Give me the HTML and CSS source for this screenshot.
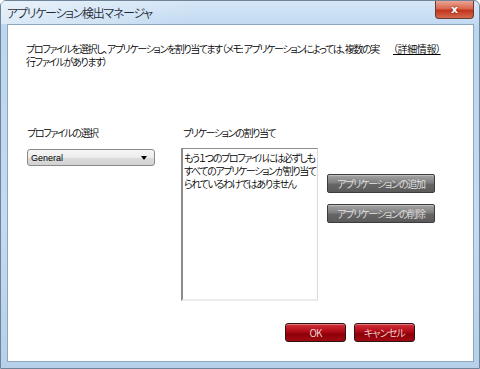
FILE: index.html
```html
<!DOCTYPE html>
<html lang="ja">
  <head>
    <meta charset="UTF-8" />
    <title>アプリケーション検出マネージャ</title>
    <link rel="stylesheet" href="styles.css">
  </head>
  <body>
    <div class="window">
      <div class="titlebar">
        <span class="title">アプリケーション検出マネージャ</span>
        <button class="close" type="button">x</button>
      </div>
      <div class="client">
        <div class="intro">
          <p class="intro-text">プロファイルを選択し、アプリケーションを割り当てます（メモ:&nbsp; アプリケーションによっては、複数の実<br>行ファイルがあります）</p>
          <a class="more" href="#">（詳細情報）</a>
        </div>

        <div class="columns">
          <div class="col col-profile">
            <label class="col-label" for="profile">プロファイルの選択</label>
            <div class="select" id="profile">
              <span>General</span>
              <span class="arrow"></span>
            </div>
          </div>
          <div class="col col-apps">
            <label class="col-label">プリケーションの割り当て</label>
            <div class="app-list">もう１つのプロファイルには必ずしも<br>すべてのアプリケーションが割り当て<br>られているわけではありません</div>
          </div>
          <div class="col col-actions">
            <button class="btn-grey" type="button">アプリケーションの追加</button>
            <button class="btn-grey" type="button">アプリケーションの削除</button>
          </div>
        </div>

        <div class="footer">
          <button class="btn-red" type="button">OK</button>
          <button class="btn-red" type="button">キャンセル</button>
        </div>
      </div>
    </div>
  </body>
</html>
```

FILE: styles.css
```css
html,
body {
  margin: 0;
  padding: 0;
  width: 480px;
  height: 369px;
  overflow: hidden;
  font-family: "Noto Sans CJK JP", "Noto Sans", sans-serif;
  font-feature-settings: "palt";
  font-weight: 350;
}

.window {
  box-sizing: border-box;
  width: 480px;
  height: 369px;
  display: flex;
  flex-direction: column;
  border: 1px solid #6f8399;
  border-radius: 6px 6px 0 0;
  background: linear-gradient(180deg, #d6e7f7 0%, #bcd6ef 8%, #c4dbf1 60%, #b6d0ea 100%);
}

.titlebar {
  height: 23px;
  display: flex;
  align-items: flex-start;
  justify-content: space-between;
  padding-left: 6px;
  background: linear-gradient(90deg, rgba(255, 255, 255, 0.45) 0%, rgba(255, 255, 255, 0) 40%);
}

.title {
  font-size: 12px;
  line-height: 12px;
  letter-spacing: -1.3px;
  margin-top: 6px;
  color: #1e2a36;
}

.close {
  width: 39px;
  height: 18px;
  margin-right: 5px;
  padding: 0;
  border: 1px solid #6b3a36;
  border-top: none;
  border-radius: 0 0 4px 4px;
  background: linear-gradient(180deg, #e9a595 0%, #d9664f 45%, #c3331d 55%, #d36a4c 100%);
  color: #fff;
  font-family: "DejaVu Sans", sans-serif;
  font-weight: bold;
  font-size: 11px;
  line-height: 16px;
  text-shadow: 0 0 2px #5a1a10;
}

.client {
  flex: 1;
  margin: 0 5px 6px 6px;
  border: 1px solid #8ea6bf;
  background: #fff;
  display: flex;
  flex-direction: column;
  font-size: 10px;
  letter-spacing: -1.4px;
  color: #000;
}

.intro {
  display: flex;
  padding: 17px 0 0 18px;
}

.intro-text {
  margin: 0;
  width: 367px;
  line-height: 13px;
  white-space: nowrap;
}

.more {
  line-height: 13px;
  letter-spacing: -0.4px;
  color: #000;
  text-decoration: underline;
}

.columns {
  display: flex;
  margin-top: 58px;
  padding-left: 19px;
}

.col {
  display: flex;
  flex-direction: column;
}

.col-label {
  line-height: 13px;
  margin-bottom: 10px;
}

.col-profile {
  width: 128px;
}

.select {
  box-sizing: border-box;
  height: 17px;
  display: flex;
  align-items: center;
  justify-content: space-between;
  padding: 0 7px 0 3px;
  border: 1px solid #8a8a8a;
  border-radius: 3px;
  background: linear-gradient(180deg, #f6f6f6 0%, #ececec 50%, #dcdcdc 51%, #d2d2d2 100%);
  font-family: "Liberation Sans", sans-serif;
  font-weight: normal;
  font-size: 9px;
  letter-spacing: 0;
}

.arrow {
  width: 0;
  height: 0;
  border-left: 3px solid transparent;
  border-right: 3px solid transparent;
  border-top: 4px solid #000;
}

.col-apps {
  width: 137px;
  margin-left: 26px;
}

.col-apps .col-label {
  padding-left: 2px;
  margin-bottom: 9px;
}

.app-list {
  box-sizing: border-box;
  height: 153px;
  padding: 2px 0 0 1px;
  border-top: 1px solid #8c8c8c;
  border-left: 2px solid #8c8c8c;
  border-right: 1px solid #dadada;
  border-bottom: 2px solid #ececec;
  line-height: 13px;
  white-space: nowrap;
}

.col-actions {
  width: 108px;
  margin-left: 9px;
  padding-top: 48px;
  gap: 11px;
}

.btn-grey {
  height: 19px;
  padding: 0;
  border: 1px solid #3c3c3c;
  border-radius: 2px;
  background: linear-gradient(180deg, #a5a5a5 0%, #7e7e7e 45%, #666 55%, #5a5a5a 100%);
  color: #e4e4e4;
  font-family: inherit;
  font-feature-settings: "palt";
  font-weight: 350;
  font-size: 10px;
  letter-spacing: -1.2px;
  line-height: 17px;
  box-shadow: inset 0 1px 0 rgba(255, 255, 255, 0.3);
}

.footer {
  display: flex;
  justify-content: flex-end;
  gap: 8px;
  margin-top: auto;
  margin-bottom: 19px;
  padding-right: 58px;
}

.btn-red {
  width: 61px;
  height: 19px;
  padding: 0;
  border: 1px solid #2c1414;
  border-radius: 3px;
  background: linear-gradient(180deg, #d2303a 0%, #b40f19 40%, #8e0008 60%, #a00a12 100%);
  color: #f2dede;
  font-family: inherit;
  font-feature-settings: "palt";
  font-weight: 350;
  font-size: 10px;
  letter-spacing: -0.8px;
  line-height: 17px;
  box-shadow: inset 0 1px 0 rgba(255, 255, 255, 0.35);
}
```
